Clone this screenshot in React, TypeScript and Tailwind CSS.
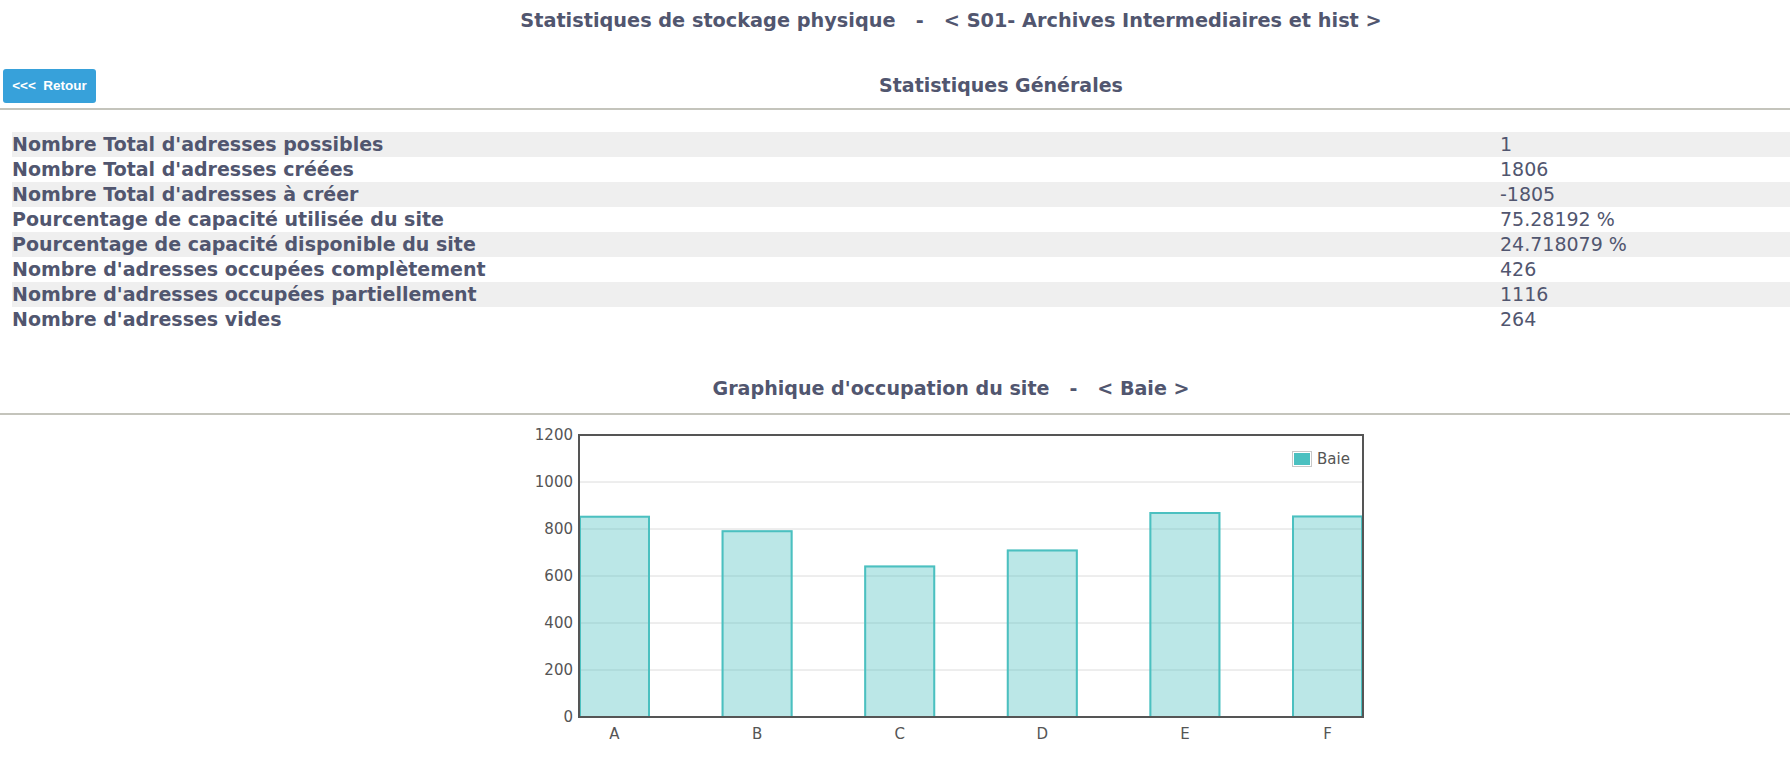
const stats: [string, string][] = [
  ["Nombre Total d'adresses possibles", '1'],
  ["Nombre Total d'adresses créées", '1806'],
  ["Nombre Total d'adresses à créer", '-1805'],
  ['Pourcentage de capacité utilisée du site', '75.28192 %'],
  ['Pourcentage de capacité disponible du site', '24.718079 %'],
  ["Nombre d'adresses occupées complètement", '426'],
  ["Nombre d'adresses occupées partiellement", '1116'],
  ["Nombre d'adresses vides", '264'],
]

const bars = [
  { label: 'A', value: 856 },
  { label: 'B', value: 795 },
  { label: 'C', value: 645 },
  { label: 'D', value: 713 },
  { label: 'E', value: 872 },
  { label: 'F', value: 857 },
]

// plot area in page coordinates
const left = 579
const right = 1363
const top = 434
const bottom = 716
const max = 1200
const barWidth = 71
const step = (right - left - barWidth) / (bars.length - 1)
const yOf = (v: number) => bottom - (v / max) * (bottom - top)

function OccupationChart() {
  const ticks = [0, 200, 400, 600, 800, 1000, 1200]
  return (
    <svg
      className="ml-[500px] mt-[6px] block h-[330px] w-[900px]"
      viewBox="500 420 900 330"
      fontFamily="DejaVu Sans, sans-serif"
    >
      {ticks.slice(1, -1).map((t) => (
        <line
          key={t}
          x1={left}
          x2={right}
          y1={yOf(t)}
          y2={yOf(t)}
          stroke="#dcdcdc"
          strokeWidth={1}
        />
      ))}
      {ticks.map((t) => (
        <text
          key={t}
          x={573}
          y={yOf(t)}
          textAnchor="end"
          dominantBaseline="central"
          fontSize={15}
          fill="#555"
        >
          {t}
        </text>
      ))}
      {bars.map((b, i) => {
        const x = left + i * step
        const y = yOf(b.value)
        return (
          <g key={b.label}>
            <rect
              x={x}
              y={y}
              width={barWidth}
              height={bottom - y}
              fill="rgba(75,192,192,0.38)"
            />
            <path
              d={`M${x + 1} ${bottom} V${y + 1} H${x + barWidth - 1} V${bottom}`}
              fill="none"
              stroke="rgb(75,192,192)"
              strokeWidth={2}
            />
            <text
              x={x + barWidth / 2}
              y={733}
              textAnchor="middle"
              dominantBaseline="central"
              fontSize={15}
              fill="#555"
            >
              {b.label}
            </text>
          </g>
        )
      })}
      <rect
        x={left}
        y={top}
        width={right - left}
        height={bottom - top}
        fill="none"
        stroke="#555"
        strokeWidth={2}
      />
      <rect x={1292.5} y={450.5} width={19} height={15} fill="#fff" stroke="#c8c8c8" />
      <rect x={1294} y={452} width={16} height={12} fill="rgb(75,192,192)" />
      <text x={1317} y={458} dominantBaseline="central" fontSize={15} fill="#555">
        Baie
      </text>
    </svg>
  )
}

export default function App() {
  return (
    <div className="min-h-[757px] w-full bg-white font-['DejaVu_Sans',sans-serif] text-[19px] text-[#51566f]">
      <h1 className="pl-[112px] pt-[9px] text-center text-[19.3px] font-bold leading-[23px]">
        Statistiques de stockage physique{'\u00a0\u00a0\u00a0-\u00a0\u00a0\u00a0'}&lt; S01- Archives
        Intermediaires et hist &gt;
      </h1>

      <div className="mt-[37px] flex items-center">
        <button className="ml-[3px] h-[34px] w-[93px] rounded-[3px] bg-[#37a1da] font-['Liberation_Sans',Arial,sans-serif] text-[13.5px] font-bold text-white">
          &lt;&lt;&lt;{'\u00a0\u00a0'}Retour
        </button>
        <h2 className="flex-1 pb-[2px] pl-[116px] text-center text-[19px] font-bold leading-[23px]">
          Statistiques Générales
        </h2>
      </div>
      <div className="mt-[5px] border-t-2 border-[#c4c4bc]" />

      <div className="ml-[12px] mt-[22px]">
        {stats.map(([label, value], i) => (
          <div
            key={label}
            className={`grid h-[25px] grid-cols-[1488px_1fr] items-center leading-[25px] ${
              i % 2 === 0 ? 'bg-[#efefef]' : 'bg-white'
            }`}
          >
            <span className="font-bold">{label}</span>
            <span>{value}</span>
          </div>
        ))}
      </div>

      <h2 className="mt-[45px] pl-[112px] text-center text-[19.1px] font-bold leading-[23px]">
        Graphique d'occupation du site{'\u00a0\u00a0\u00a0-\u00a0\u00a0\u00a0'}&lt; Baie &gt;
      </h2>
      <div className="mt-[13px] border-t-2 border-[#c4c4bc]" />

      <OccupationChart />
    </div>
  )
}
